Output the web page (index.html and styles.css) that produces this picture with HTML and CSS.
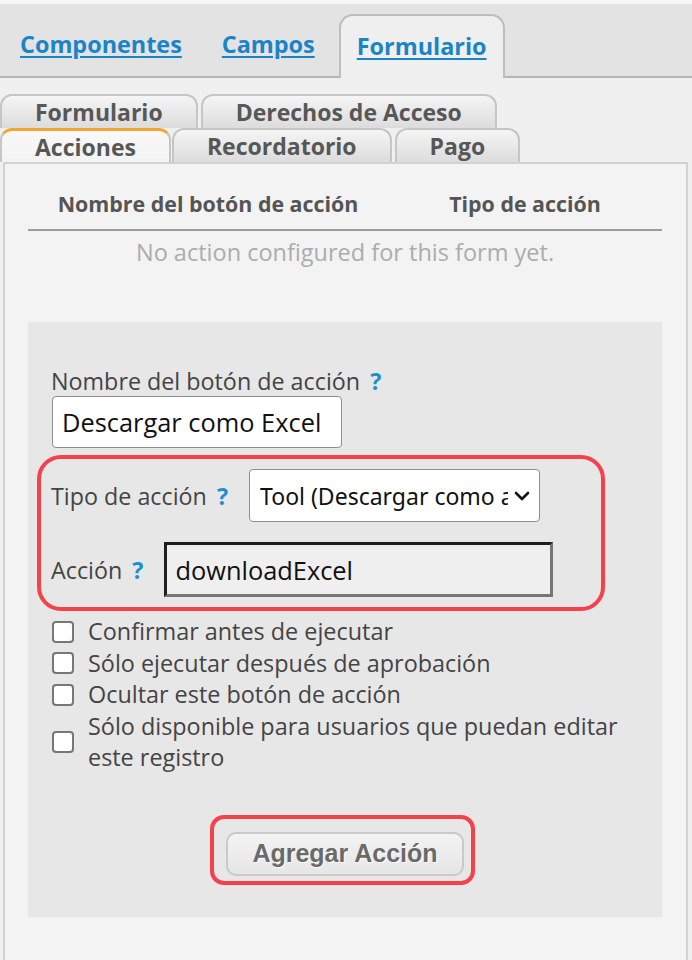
FILE: index.html
```html
<!DOCTYPE html>
<html lang="es">
<head>
    <meta charset="UTF-8">
    <meta name="viewport" content="width=device-width, initial-scale=1.0">
    <title>Acciones del formulario</title>
    <link rel="stylesheet" href="styles.css">
</head>
<body>
    <div class="topbar">
        <a href="#" class="top-tab">Componentes</a>
        <a href="#" class="top-tab">Campos</a>
        <a href="#" class="top-tab active">Formulario</a>
    </div>

    <div class="subtabs">
        <div class="subtab-row">
            <span class="subtab">Formulario</span>
            <span class="subtab">Derechos de Acceso</span>
        </div>
        <div class="subtab-row">
            <span class="subtab active">Acciones</span>
            <span class="subtab">Recordatorio</span>
            <span class="subtab">Pago</span>
        </div>
    </div>

    <div class="panel">
        <table class="action-table">
            <thead>
                <tr>
                    <th class="col-name">Nombre del botón de acción</th>
                    <th class="col-type">Tipo de acción</th>
                </tr>
            </thead>
            <tbody>
                <tr>
                    <td colspan="2" class="empty">No action configured for this form yet.</td>
                </tr>
            </tbody>
        </table>

        <div class="action-form">
            <label class="field-label" for="btnName">Nombre del botón de acción <span class="help">?</span></label>
            <input type="text" id="btnName" class="text-input name-input" value="Descargar como Excel">

            <div class="highlight type-box">
                <div class="field-row">
                    <span class="field-label">Tipo de acción <span class="help">?</span></span>
                    <div class="select">
                        <span class="select-text">Tool (Descargar como archivo Excel)</span>
                        <svg class="chevron" width="16" height="10" viewBox="0 0 16 10">
                            <path d="M2 2 L8 8 L14 2" fill="none" stroke="#111" stroke-width="2.6" stroke-linecap="round" stroke-linejoin="round"/>
                        </svg>
                    </div>
                </div>
                <div class="field-row action-row">
                    <span class="field-label">Acción <span class="help">?</span></span>
                    <input type="text" class="text-input action-input" value="downloadExcel">
                </div>
            </div>

            <ul class="options">
                <li><input type="checkbox" id="opt1"><label for="opt1">Confirmar antes de ejecutar</label></li>
                <li><input type="checkbox" id="opt2"><label for="opt2">Sólo ejecutar después de aprobación</label></li>
                <li><input type="checkbox" id="opt3"><label for="opt3">Ocultar este botón de acción</label></li>
                <li><input type="checkbox" id="opt4"><label for="opt4">Sólo disponible para usuarios que puedan editar este registro</label></li>
            </ul>

            <div class="submit-area">
                <div class="highlight button-box">
                    <button type="button" class="add-btn">Agregar Acción</button>
                </div>
            </div>
        </div>
    </div>
</body>
</html>
```

FILE: styles.css
```css
body {
    margin: 0;
    padding: 0;
    background: #f0f0f0;
    font-family: 'Open Sans', 'Noto Sans', sans-serif;
    color: #444;
}
.topbar {
    display: flex;
    align-items: flex-end;
    height: 72px;
    padding-left: 2px;
    background: #e3e3e3;
    border-top: 4px solid #f7f7f7;
    border-bottom: 2px solid #b5b5b5;
}
.top-tab {
    display: flex;
    align-items: center;
    height: 60px;
    padding: 0 18px 2px;
    margin-right: 4px;
    color: #1a84c9;
    font-size: 23.4px;
    font-weight: bold;
    text-decoration: underline;
    text-underline-offset: 3px;
}
.top-tab.active {
    padding: 0 16px 2px;
    margin-left: 2px;
    margin-bottom: -2px;
    background: #efefef;
    border: 2px solid #bdbdbd;
    border-bottom: none;
    border-radius: 14px 14px 0 0;
}
.subtabs {
    padding-top: 16px;
}
.subtab-row {
    display: flex;
}
.subtab {
    display: flex;
    align-items: center;
    height: 32px;
    padding: 0 33px;
    margin-right: 3px;
    color: #575757;
    font-size: 23px;
    font-weight: bold;
    background: linear-gradient(#f5f5f5, #dcdcdc);
    border: 2px solid #c6c6c6;
    border-bottom: none;
    border-radius: 12px 12px 0 0;
}
.subtab.active {
    background: linear-gradient(#f8f8f8, #f3f3f3);
    border-top: 3px solid #f3a533;
    height: 31px;
    margin-right: 1px;
}
.panel {
    margin: 0 4px 0 3px;
    padding: 0 24px 60px 23px;
    background: #f3f3f3;
    border: 2px solid #d2d2d2;
}
.action-table {
    width: 100%;
    margin-top: 15px;
    border-collapse: collapse;
}
.action-table th {
    padding: 12px 0;
    line-height: 26px;
    color: #555;
    font-size: 21.4px;
    border-bottom: 2px solid #9c9c9c;
}
.col-name {
    width: 360px;
}
.empty {
    padding: 8px 0 0;
    line-height: 26px;
    text-align: center;
    color: #acacac;
    font-size: 23.5px;
}
.action-form {
    margin-top: 57px;
    padding: 44px 23px 32px;
    background: #e7e7e7;
}
.field-label {
    display: block;
    line-height: 30px;
    font-size: 23.3px;
    color: #444;
    white-space: nowrap;
}
.help {
    margin-left: 4px;
    color: #1a8fd2;
    font-weight: bold;
}
.text-input {
    box-sizing: border-box;
    font-family: 'Open Sans', sans-serif;
    font-size: 25.4px;
    color: #111;
    outline: none;
}
.name-input {
    display: block;
    width: 290px;
    height: 52px;
    padding: 0 9px;
    margin-left: 1px;
    background: #fff;
    border: 1px solid #8e8e8e;
    border-radius: 4px;
}
.highlight {
    border: 4px solid #f5414b;
}
.type-box {
    width: 568px;
    box-sizing: border-box;
    margin: 7px 0 0 -14px;
    padding: 10px 10px 10px;
    border-radius: 24px;
}
.field-row {
    display: flex;
    align-items: center;
    gap: 21px;
}
.action-row {
    margin-top: 20px;
}
.select {
    display: flex;
    align-items: center;
    box-sizing: border-box;
    width: 291px;
    height: 53px;
    padding: 0 9px 0 10px;
    background: #fff;
    border: 1px solid #8e8e8e;
    border-radius: 4px;
}
.select-text {
    flex: 1;
    overflow: hidden;
    white-space: nowrap;
    font-family: 'Noto Sans', sans-serif;
    font-size: 23px;
    color: #111;
}
.chevron {
    margin-left: 6px;
    flex-shrink: 0;
}
.action-input {
    width: 389px;
    height: 55px;
    padding: 0 8px;
    background: #efefef;
    border: 3px solid;
    border-color: #1e1e1e #767676 #767676 #1e1e1e;
}
.options {
    list-style: none;
    margin: 5px 0 0;
    padding: 0;
}
.options li {
    display: flex;
    align-items: center;
    line-height: 31.5px;
    font-size: 23.4px;
    color: #444;
}
.options input {
    appearance: none;
    flex-shrink: 0;
    width: 22px;
    height: 22px;
    margin: 0 14px 0 1px;
    background: #fff;
    border: 2px solid #777;
    border-radius: 4px;
}
.submit-area {
    margin-top: 41px;
    text-align: center;
}
.button-box {
    display: inline-block;
    margin-right: 5px;
    padding: 13px 7px 5px 12px;
    border-radius: 14px;
}
.add-btn {
    display: block;
    width: 238px;
    height: 44px;
    font-family: 'Liberation Sans', Arial, sans-serif;
    font-size: 25px;
    font-weight: bold;
    color: #6a6a6a;
    text-shadow: 1px 1px 0 #fff;
    background: linear-gradient(#f3f3f3, #e6e6e6);
    border: 2px solid #c9c9c9;
    border-radius: 10px;
    cursor: pointer;
}
```
